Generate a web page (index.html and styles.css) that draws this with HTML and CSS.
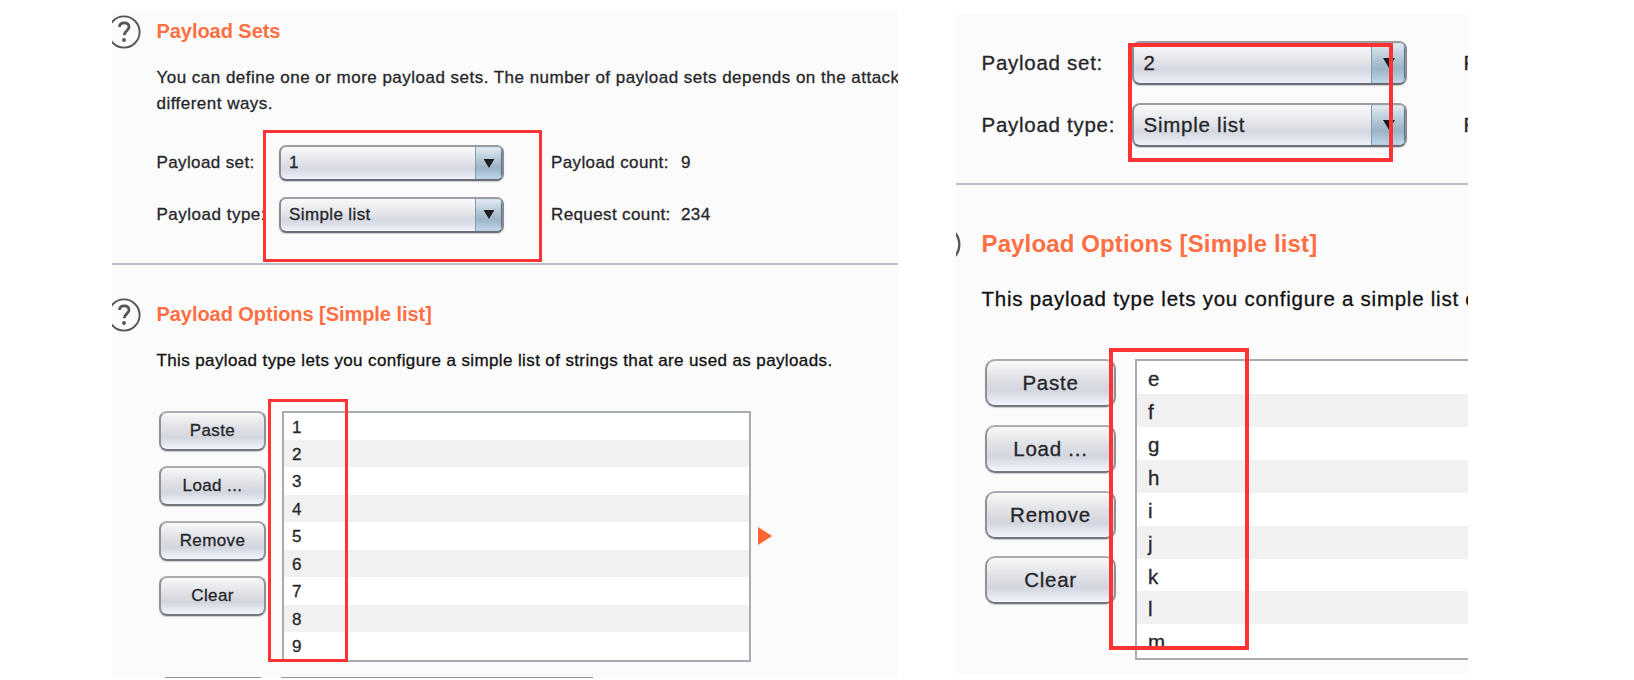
FILE: index.html
```html
<!DOCTYPE html>
<html lang="en">
<head>
<meta charset="utf-8">
<title>Payload Sets</title>
<link rel="stylesheet" href="styles.css">
</head>
<body>
<main class="stage">
  <section class="panel panel-first">
    <header class="head">
      <svg class="help" viewBox="0 0 34 34"><circle cx="17" cy="17" r="15.6"/><path d="M12.500 12c0-2.800 2-4.200 4.800-4.200s4.700 1.600 4.700 4.200c0 3.800-4.800 4-4.800 8.200"/><circle class="dot" cx="17" cy="25" r="1.900"/></svg>
      <h2>Payload Sets</h2>
    </header>
    <p class="desc intro">You can define one or more payload sets. The number of payload sets depends on the attack<br>different ways.</p>
    <div class="form">
      <span>Payload set:</span><div class="combo"><span>1</span><i><svg viewBox="0 0 12 10"><path d="M0 0h12L6 10z"/></svg></i></div><span class="count">Payload count:</span><span>9</span>
      <span class="type-label">Payload type:</span><div class="combo"><span>Simple list</span><i><svg viewBox="0 0 12 10"><path d="M0 0h12L6 10z"/></svg></i></div><span class="count">Request count:</span><span>234</span>
    </div>
    <hr>
    <header class="head">
      <svg class="help" viewBox="0 0 34 34"><circle cx="17" cy="17" r="15.6"/><path d="M12.500 12c0-2.800 2-4.200 4.800-4.200s4.700 1.600 4.700 4.200c0 3.800-4.800 4-4.800 8.200"/><circle class="dot" cx="17" cy="25" r="1.900"/></svg>
      <h2>Payload Options [Simple list]</h2>
    </header>
    <p class="desc dark">This payload type lets you configure a simple list of strings that are used as payloads.</p>
    <div class="options">
      <div class="buttons"><button>Paste</button><button>Load ...</button><button>Remove</button><button>Clear</button></div>
      <ul class="list"><li>1</li><li>2</li><li>3</li><li>4</li><li>5</li><li>6</li><li>7</li><li>8</li><li>9</li></ul>
      <svg class="marker" viewBox="0 0 14 18"><path d="M0 0l14 9L0 18z"/></svg>
    </div>
    <div class="add-row"><div class="add-button"></div><div class="add-field"></div></div>
  </section>

  <section class="panel panel-second">
    <div class="form">
      <span>Payload set:</span><div class="combo"><span>2</span><i><svg viewBox="0 0 12 10"><path d="M0 0h12L6 10z"/></svg></i></div><span class="count">P</span>
      <span>Payload type:</span><div class="combo"><span>Simple list</span><i><svg viewBox="0 0 12 10"><path d="M0 0h12L6 10z"/></svg></i></div><span class="count">R</span>
    </div>
    <hr>
    <header class="head">
      <svg class="help" viewBox="0 0 34 34"><circle cx="17" cy="17" r="15.6"/></svg>
      <h2>Payload Options [Simple list]</h2>
    </header>
    <p class="desc dark">This payload type lets you configure a simple list o</p>
    <div class="options">
      <div class="buttons"><button>Paste</button><button>Load ...</button><button>Remove</button><button>Clear</button></div>
      <ul class="list"><li>e</li><li>f</li><li>g</li><li>h</li><li>i</li><li>j</li><li>k</li><li>l</li><li>m</li></ul>
    </div>
  </section>

  <div class="mark mark-sets"></div>
  <div class="mark mark-numbers"></div>
  <div class="mark mark-second-set"></div>
  <div class="mark mark-letters"></div>
</main>
</body>
</html>
```

FILE: styles.css
```css
* { box-sizing: border-box; }
body { margin: 0; background: #fff; font-family: "Liberation Sans", Arial, sans-serif; color: #26262a; }
.stage { position: relative; width: 1634px; height: 680px; overflow: hidden; display: flex; align-items: flex-start; gap: 58px; padding: 10px 0 0 112px; }
.panel { flex: none; background: #fbfbfb; overflow: hidden; font-size: var(--size); letter-spacing: var(--track); white-space: nowrap; -webkit-text-stroke: .3px currentColor; }
.panel-first {
  --size: 17px; --track: .38px; --indent: 44.5px; --icon: 34px; --icon-shift: -5.5px; --head: 20px; --head-track: -.05px;
  --line: 26px; --combo: 36px; --combo-gap: 15.5px; --arrow: 27px; --radius: 7px; --row: 27.45px;
  width: 786px; height: 668px; padding-top: 5px;
}
.panel-second {
  --size: 20.5px; --track: .75px; --indent: 25.5px; --icon: 41px; --icon-shift: -36px; --head: 24px; --head-track: .13px;
  --line: 31px; --combo: 44px; --combo-gap: 17.7px; --arrow: 34px; --radius: 8px; --row: 32.9px;
  width: 512px; height: 660px; margin-top: 4px; padding-top: 27px;
}
.head { display: grid; grid-template-columns: var(--indent) 1fr; align-items: center; height: var(--icon); }
.head h2 { margin: 0; padding-bottom: 3px; font-size: var(--head); line-height: 1.2; letter-spacing: var(--head-track); color: #ff6f43; -webkit-text-stroke: 0; }
.panel-second .head h2 { padding-bottom: 1px; }
.help { width: var(--icon); height: var(--icon); margin-left: var(--icon-shift); fill: none; stroke: #555; stroke-width: 1.9; }
.help path { stroke-width: 2.8; }
.help .dot { fill: #555; stroke: none; }
.desc { margin: 16px 0 0 var(--indent); line-height: var(--line); }
.intro { letter-spacing: .48px; }
.dark { color: #111; }
.panel-second .desc { margin-top: 18px; }
.form { display: grid; grid-template-columns: 122.5px 225px 177px 1fr; align-items: center; row-gap: var(--combo-gap); margin: 28px 0 0 var(--indent); grid-auto-rows: var(--combo); }
.type-label { letter-spacing: .5px; }
.panel-second .form { grid-template-columns: 150px 275.5px 61px; margin-top: 0; }
.panel-second .form > span { letter-spacing: .72px; }
.count { padding-left: 47px; }
.panel-second .count { padding-left: 56.5px; }
.combo { height: var(--combo); display: flex; align-items: stretch; overflow: hidden; border: 2px solid #898c93; border-top-color: #9a9da2; border-bottom-color: #6b6e77; border-radius: var(--radius); background: linear-gradient(#fafafb, #e2e4e9 45%, #d5d8e0 68%, #eef1fa); box-shadow: 0 1px 1px #ccc; }
.combo span { flex: 1; align-self: center; padding-left: 8px; }
.panel-second .combo span { padding-left: 10px; }
.combo i { width: var(--arrow); display: flex; align-items: center; justify-content: center; border-left: 1px solid #819bb1; background: linear-gradient(#e3ecf3, #aec2d2 45%, #9db3c6 65%, #c0d7ec); box-shadow: inset -1px 0 1px #55738d; }
.combo svg { width: 12px; height: 9px; fill: #1d1d1f; }
.panel-second .combo svg { width: 14px; height: 10px; }
hr { height: 2px; border: 0; margin: 30.5px 0 33px; background: #bcc0c8; }
.panel-second hr { margin: 36px 0 39.500px; }
.options { display: flex; align-items: flex-start; margin: 36.5px 0 0 47px; }
.panel-second .options { margin: 45px 0 0 29px; }
.buttons { display: flex; flex-direction: column; gap: 15px; width: 107px; margin-right: 15.5px; flex: none; }
.panel-second .buttons { gap: 17.7px; width: 131px; margin-right: 19px; }
button { height: 40px; padding: 0; font: inherit; letter-spacing: inherit; color: inherit; border: 2px solid #8e9196; border-top-color: #a9acb0; border-bottom-color: #74777d; border-radius: 8px; background: linear-gradient(#f8f8f9, #dfe1e6 40%, #d3d6de 68%, #f3f5ff); box-shadow: 0 1px 1px #ccc; }
.panel-second button { height: 48px; border-radius: 10px; }
.list { flex: none; width: 469px; height: 251px; margin: 0; padding: 0; list-style: none; border: 2px solid #a7abb3; background: #fff; overflow: hidden; }
.panel-second .list { width: 400px; height: 301px; }
.list li { height: var(--row); line-height: calc(var(--row) + 2px); padding-left: 8.500px; }
.panel-second .list li { line-height: calc(var(--row) + 4px); padding-left: 11px; }
.list li:nth-child(even) { background: #f1f1f1; }
.marker { align-self: center; width: 14px; height: 18px; margin-left: 7px; fill: #ff6633; }
.add-row { display: flex; gap: 18px; margin: 15px 0 0 51px; }
.add-button { width: 100px; height: 4px; background: #8e9297; border-radius: 5px 5px 0 0; }
.add-field { width: 312px; height: 4px; background: #929292; }
.mark { position: absolute; border: 3px solid #ff3333; }
.mark-sets { left: 263px; top: 130px; width: 279px; height: 132px; }
.mark-numbers { left: 268px; top: 399px; width: 80px; height: 263px; }
.mark-second-set { left: 1128px; top: 43px; width: 265px; height: 119px; border-width: 4px; }
.mark-letters { left: 1109px; top: 348px; width: 140px; height: 302px; border-width: 4px; }
```
